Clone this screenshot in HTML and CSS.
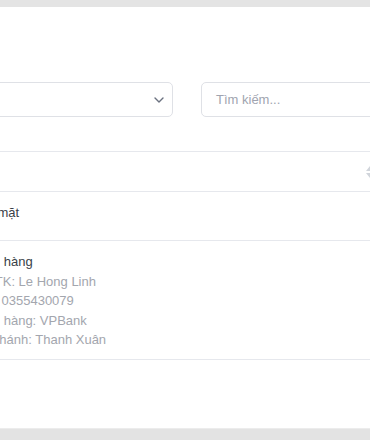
FILE: index.html
```html
<!DOCTYPE html>
<html lang="vi">
<head>
<meta charset="utf-8">
<link rel="stylesheet" href="styles.css">
</head>
<body>
<div class="topbar"></div>
<main class="panel">
  <div class="content">
    <div class="filters">
      <div class="select">
        <svg class="chev" width="10" height="6" viewBox="0 0 10 6"><path d="M1 1l4 4 4-4" fill="none" stroke="#6b7280" stroke-width="1.4" stroke-linecap="round" stroke-linejoin="round"/></svg>
      </div>
      <div class="search">Tìm kiếm...</div>
    </div>
    <div class="table">
      <div class="thead">
        <span></span>
        <svg class="sort" width="8" height="12" viewBox="0 0 8 12"><path d="M4 0L8 5H0z M4 12L0 7h8z" fill="#d1d5db"/></svg>
      </div>
      <div class="row row-cash"><span class="title">Tiền mặt</span></div>
      <div class="row row-bank">
        <span class="title">Ngân hàng</span>
        <span class="detail">Tên TK: Le Hong Linh</span>
        <span class="detail">STK: 0355430079</span>
        <span class="detail">Ngân hàng: VPBank</span>
        <span class="detail">Chi nhánh: Thanh Xuân</span>
      </div>
    </div>
  </div>
</main>
<div class="bottombar"></div>
</body>
</html>
```

FILE: styles.css
```css
html, body {
  margin: 0;
  padding: 0;
  width: 370px;
  height: 440px;
  overflow: hidden;
  background: #ffffff;
  font-family: "Liberation Sans", Arial, sans-serif;
  font-size: 13px;
}
.topbar {
  height: 7px;
  background: #e4e4e4;
}
.bottombar {
  height: 12px;
  background: #e3e3e3;
  border-top: 1px solid #ececec;
  box-sizing: border-box;
}
.panel {
  height: 421px;
  overflow: hidden;
}
.content {
  margin-left: -33px;
  width: 412px;
  padding-top: 75px;
}
.filters {
  display: flex;
  gap: 28px;
}
.select {
  width: 206px;
  height: 35px;
  box-sizing: border-box;
  border: 1px solid #dfe1e6;
  border-radius: 5px;
  display: flex;
  align-items: center;
  justify-content: flex-end;
  padding-right: 8px;
}
.chev {
  display: block;
}
.search {
  flex: 1;
  height: 35px;
  box-sizing: border-box;
  border: 1px solid #dfe1e6;
  border-radius: 5px;
  padding-left: 14px;
  display: flex;
  align-items: center;
  color: #a0a4b0;
}
.table {
  margin-top: 34px;
  border-top: 1px solid #e6e8ed;
}
.thead {
  height: 39px;
  border-bottom: 1px solid #e6e8ed;
  display: flex;
  align-items: center;
  justify-content: space-between;
  padding-right: 5px;
}
.sort {
  display: block;
}
.row {
  display: flex;
  flex-direction: column;
  border-bottom: 1px solid #e6e8ed;
  line-height: 19.5px;
  padding-left: 2px;
}
.row-cash {
  height: 48px;
  box-sizing: content-box;
  padding-top: 0;
}
.row-cash .title {
  margin-top: 11px;
}
.row-bank {
  padding-top: 11px;
  padding-bottom: 9px;
}
.title {
  color: #3a3f48;
}
.detail {
  color: #a3a6ae;
}
```
